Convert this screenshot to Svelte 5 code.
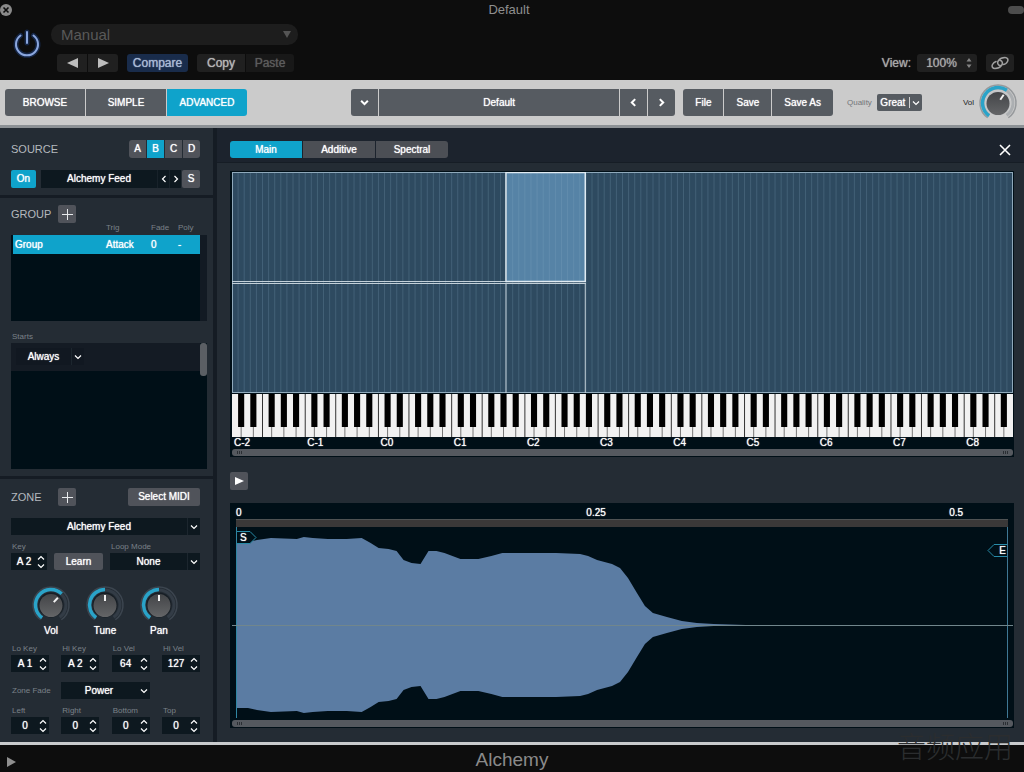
<script lang="ts">
  interface Knob {
    label: string;
    value: number;
  }

  interface Field {
    label: string;
    value: string;
  }

  const NOTES = 128;
  const BLACK = [1, 3, 6, 8, 10];
  const LENGTH = 0.536;

  const modes = ['BROWSE', 'SIMPLE', 'ADVANCED'];
  const fileActions = ['File', 'Save', 'Save As'];
  const sources = ['A', 'B', 'C', 'D'];
  const tabs = ['Main', 'Additive', 'Spectral'];

  let mode = $state('ADVANCED');
  let source = $state('B');
  let tab = $state('Main');

  const knobs: Knob[] = [
    { label: 'Vol', value: 65 },
    { label: 'Tune', value: 50 },
    { label: 'Pan', value: 50 },
  ];

  const rangeFields: Field[] = [
    { label: 'Lo Key', value: 'A 1' },
    { label: 'Hi Key', value: 'A 2' },
    { label: 'Lo Vel', value: '64' },
    { label: 'Hi Vel', value: '127' },
  ];

  const fadeFields: Field[] = [
    { label: 'Left', value: '0' },
    { label: 'Right', value: '0' },
    { label: 'Bottom', value: '0' },
    { label: 'Top', value: '0' },
  ];

  const notes = Array.from({ length: NOTES }, (_, i) => i);
  const blackKeys = notes.filter((n) => BLACK.includes(n % 12));
  // B/C and E/F have no black key between them
  const seams = notes.filter((n) => n > 0 && (n % 12 === 0 || n % 12 === 5));
  const octaves = Array.from({ length: 11 }, (_, i) => i);
  const ticks = [0, 0.25, 0.5];

  // [x, half height]
  const envelope = [
    [0, 83], [11, 83], [20, 85], [34, 87], [60, 86], [67, 88], [76, 87], [91, 86], [110, 86],
    [125, 87], [134, 82], [142, 77], [152, 76], [160, 74], [167, 65], [175, 62], [184, 61],
    [192, 74], [200, 74], [208, 72], [224, 66], [242, 66], [255, 69], [266, 72], [320, 72],
    [344, 71], [352, 69], [361, 65], [376, 61], [384, 57], [392, 47], [401, 32], [409, 19],
    [417, 12], [431, 8], [446, 4], [461, 2], [478, 1], [510, 0],
  ];
  const wave = [
    ...envelope.map(([x, h]) => `${x},${98 - h}`),
    ...[...envelope].reverse().map(([x, h]) => `${x},${98 + h}`),
  ].join(' ');

  function polar(r: number, deg: number) {
    const a = ((deg - 90) * Math.PI) / 180;
    return `${20 + r * Math.cos(a)} ${20 + r * Math.sin(a)}`;
  }

  function arc(r: number, from: number, to: number) {
    return `M${polar(r, from)}A${r} ${r} 0 ${to - from > 180 ? 1 : 0} 1 ${polar(r, to)}`;
  }

  const angle = (value: number) => -145 + value * 2.9;
</script>

{#snippet chevron(dir: string)}
  <svg class="chevron" viewBox="0 0 8 8" aria-hidden="true">
    {#if dir === 'down'}
      <path d="M1 2.5l3 3 3-3" />
    {:else if dir === 'up'}
      <path d="M1 5.5l3-3 3 3" />
    {:else if dir === 'left'}
      <path d="M5.5 1l-3 3 3 3" />
    {:else}
      <path d="M2.5 1l3 3-3 3" />
    {/if}
  </svg>
{/snippet}

{#snippet plus()}
  <svg width="11" height="11" viewBox="0 0 11 11" aria-hidden="true">
    <path d="M5.5 0v11M0 5.5h11" stroke="#e8eaec" />
  </svg>
{/snippet}

{#snippet dial(value: number, light: boolean)}
  <svg class="dial" viewBox="0 0 40 40" aria-hidden="true">
    <path d={arc(18, -145, 145)} fill="none" stroke={light ? '#96999c' : '#3c454f'} stroke-width="1.5" />
    <path d={arc(15, -145, 145)} fill="none" stroke={light ? '#acafb2' : '#333c46'} stroke-width="3" />
    <path d={arc(15.5, -145, angle(value))} fill="none" stroke="#2aa3c8" stroke-width="3.5" />
    <circle cx="20" cy="20" r="12.5" fill={light ? '#c3c5c7' : '#161d24'} />
    <circle cx="20" cy="20.5" r="11.5" fill="url(#cap)" />
    <path d={`M${polar(4, angle(value))}L${polar(10, angle(value))}`} stroke="#f2f2f2" stroke-width="2" />
  </svg>
{/snippet}

{#snippet stepper(field: Field)}
  <div class="field">
    <label class="caption" for={field.label}>{field.label}</label>
    <div class="stepper">
      <input id={field.label} value={field.value} />
      <div class="arrows">
        <button aria-label="Increase {field.label}">{@render chevron('up')}</button>
        <button aria-label="Decrease {field.label}">{@render chevron('down')}</button>
      </div>
    </div>
  </div>
{/snippet}

{#snippet scrollbar()}
  <div class="scrollbar">
    <span class="grip left"></span>
    <span class="grip right"></span>
  </div>
{/snippet}

<svg class="defs" width="0" height="0" aria-hidden="true">
  <defs>
    <linearGradient id="cap" x1="0" y1="0" x2="0" y2="1">
      <stop offset="0" stop-color="#434548" />
      <stop offset="1" stop-color="#646567" />
    </linearGradient>
  </defs>
</svg>

<div class="plugin">
  <header class="host">
    <div class="titlebar">
      <button class="window-close" aria-label="Close window">
        <svg width="12" height="12" viewBox="0 0 12 12">
          <circle cx="6" cy="6" r="6" fill="#8a8a8a" />
          <path d="M3.5 3.5l5 5M8.5 3.5l-5 5" stroke="#0d0d0d" stroke-width="1.6" />
        </svg>
      </button>
      <span class="title">Default</span>
      <button class="pill" aria-label="Toggle toolbar"></button>
    </div>
    <div class="host-body">
      <button class="power" aria-label="Power">
        <svg width="34" height="34" viewBox="0 0 34 34" fill="none" stroke-linecap="round">
          <g stroke="#1d3f80" stroke-width="5" opacity="0.5">
            <path d="M10.5 8.5a11 11 0 1 0 13 0M17 5v11" />
          </g>
          <path d="M10.5 8.5a11 11 0 1 0 13 0M17 5v11" stroke="#8aa6de" stroke-width="2" />
        </svg>
      </button>
      <div class="host-controls">
        <div class="manual">
          <select aria-label="Setting"><option>Manual</option></select>
          <svg width="8" height="7" viewBox="0 0 8 7"><path d="M0 0h8L4 7z" fill="#555" /></svg>
        </div>
        <div class="host-row">
          <div class="host-group nav">
            <button aria-label="Previous setting">
              <svg width="11" height="10" viewBox="0 0 11 10"><path d="M11 0v10L0 5z" fill="#bdbdbd" /></svg>
            </button>
            <button aria-label="Next setting">
              <svg width="11" height="10" viewBox="0 0 11 10"><path d="M0 0v10l11-5z" fill="#bdbdbd" /></svg>
            </button>
          </div>
          <button class="compare">Compare</button>
          <div class="host-group copy">
            <button>Copy</button>
            <button disabled>Paste</button>
          </div>
        </div>
      </div>
      <div class="view">
        <label for="view">View:</label>
        <div class="zoom">
          <select id="view"><option>100%</option></select>
          <svg width="6" height="10" viewBox="0 0 6 10"><path d="M3 0l2.5 3.5h-5zM3 10L.5 6.5h5z" fill="#858585" /></svg>
        </div>
        <button class="link" aria-label="Link">
          <svg width="18" height="14" viewBox="0 0 18 14" fill="none" stroke="#a0a0a0" stroke-width="1.5" stroke-linecap="round">
            <path d="M9.5 9.5C6.500 9.500 6 6.500 7.500 4.500C9 2.500 11.500 1.500 14 1.500C16.500 1.500 17.500 3.500 16.500 5.500C15.500 7.500 14 8.500 12 8.500" />
            <path d="M9 4.500C11.500 4.500 12 7.500 10.500 9.500C9 11.500 6.500 12.500 4 12.500C1.500 12.500 .5 10.500 1.500 8.500C2.300 7 3.500 6 5 5.500" />
          </svg>
        </button>
      </div>
    </div>
  </header>

  <nav class="toolbar">
    <div class="bar-group modes">
      {#each modes as item}
        <button class:active={mode === item} onclick={() => (mode = item)}>{item}</button>
      {/each}
    </div>
    <div class="bar-group preset">
      <button class="arrow" aria-label="Preset menu">{@render chevron('down')}</button>
      <button class="name">Default</button>
      <button class="arrow" aria-label="Previous preset">{@render chevron('left')}</button>
      <button class="arrow" aria-label="Next preset">{@render chevron('right')}</button>
    </div>
    <div class="bar-group files">
      {#each fileActions as item}
        <button>{item}</button>
      {/each}
    </div>
    <label class="quality-label" for="quality">Quality</label>
    <div class="quality">
      <select id="quality"><option>Great</option></select>
      <span class="arrow-box">{@render chevron('down')}</span>
    </div>
    <label class="master">
      <span>Vol</span>
      <span class="dial-box">
        {@render dial(62, true)}
        <input type="range" value="62" />
      </span>
    </label>
  </nav>

  <main>
    <aside>
      <section class="source">
        <div class="row">
          <h2>SOURCE</h2>
          <div class="letters">
            {#each sources as item}
              <button class:active={source === item} onclick={() => (source = item)}>{item}</button>
            {/each}
          </div>
        </div>
        <div class="row">
          <button class="small active on">On</button>
          <div class="picker">
            <button class="picker-name">Alchemy Feed</button>
            <button class="step" aria-label="Previous source">{@render chevron('left')}</button>
            <button class="step" aria-label="Next source">{@render chevron('right')}</button>
          </div>
          <button class="small solo">S</button>
        </div>
      </section>

      <section class="group">
        <div class="row head">
          <h2>GROUP</h2>
          <button class="small add" aria-label="Add group">{@render plus()}</button>
        </div>
        <div class="group-list">
          <table>
            <thead>
              <tr><th aria-label="Name"></th><th>Trig</th><th>Fade</th><th>Poly</th></tr>
            </thead>
            <tbody>
              <tr><td>Group</td><td>Attack</td><td>0</td><td>-</td></tr>
            </tbody>
          </table>
          <div class="lane"></div>
        </div>
        <label class="caption" for="starts">Starts</label>
        <div class="starts">
          <div class="starts-row">
            <div class="select always">
              <select id="starts"><option>Always</option></select>
              <span class="arrow-box">{@render chevron('down')}</span>
            </div>
          </div>
          <div class="thumb"></div>
        </div>
      </section>

      <section class="zone">
        <div class="row head">
          <h2>ZONE</h2>
          <button class="small add" aria-label="Add zone">{@render plus()}</button>
          <button class="small midi">Select MIDI</button>
        </div>
        <div class="select feed">
          <select aria-label="Zone"><option>Alchemy Feed</option></select>
          <span class="arrow-box">{@render chevron('down')}</span>
        </div>
        <div class="row key-row">
          {@render stepper({ label: 'Key', value: 'A 2' })}
          <button class="small learn">Learn</button>
          <div class="loop">
            <label class="caption" for="loop">Loop Mode</label>
            <div class="select">
              <select id="loop"><option>None</option></select>
              <span class="arrow-box">{@render chevron('down')}</span>
            </div>
          </div>
        </div>
        <div class="knobs">
          {#each knobs as knob}
            <label class="knob">
              <span class="dial-box">
                {@render dial(knob.value, false)}
                <input type="range" value={knob.value} />
              </span>
              <span>{knob.label}</span>
            </label>
          {/each}
        </div>
        <div class="fields">
          {#each rangeFields as field}
            {@render stepper(field)}
          {/each}
        </div>
        <div class="row fade">
          <label class="caption" for="fade">Zone Fade</label>
          <div class="select">
            <select id="fade"><option>Power</option></select>
            <span class="arrow-box plain">{@render chevron('down')}</span>
          </div>
        </div>
        <div class="fields">
          {#each fadeFields as field}
            {@render stepper(field)}
          {/each}
        </div>
      </section>
    </aside>

    <div class="editor">
      <div class="editor-head">
        <div class="tabs">
          {#each tabs as item}
            <button class:active={tab === item} onclick={() => (tab = item)}>{item}</button>
          {/each}
        </div>
        <button class="close" aria-label="Close editor">
          <svg width="12" height="12" viewBox="0 0 12 12"><path d="M1 1l10 10M11 1L1 11" stroke="#fff" stroke-width="1.6" /></svg>
        </button>
      </div>

      <div class="editor-body">
        <div class="keymap">
          <svg class="zones" viewBox="0 0 128 221" preserveAspectRatio="none">
            <rect width="128" height="221" fill="#2e4a60" />
            <rect x="45" width="13" height="110" fill="#5683a6" />
            {#each notes as n}
              <path class="hair" d="M{n} 0v221" />
            {/each}
            <path class="frame" d="M0 0H128V221H0z" />
            <path class="edge" d="M0 109.5H45M0 111.5H58M44.9 111V221M57.9 111V221" />
            <path class="edge selected" d="M44.9 .5H57.9V109.5H44.9z" />
          </svg>
          <svg class="keys" viewBox="0 0 128 43" preserveAspectRatio="none">
            <rect width="128" height="43" fill="#f1f1f1" />
            {#each seams as n}
              <path class="seam" d="M{n} 0V43" />
            {/each}
            {#each blackKeys as n}
              <path class="seam light" d="M{n + 0.5} 33V43" />
              <rect x={n} width="1" height="33" fill="#000" />
            {/each}
          </svg>
          <div class="octaves">
            {#each octaves as o}
              <span style="grid-column-start: {o * 12 + 1}">C{o - 2}</span>
            {/each}
          </div>
          {@render scrollbar()}
        </div>

        <button class="small play" aria-label="Play">
          <svg width="9" height="8" viewBox="0 0 9 8"><path d="M0 0v8l9-4z" fill="#fff" /></svg>
        </button>

        <div class="sample">
          <div class="ruler">
            {#each ticks as t}
              <span class:first={t === 0} style="left: {(t / LENGTH) * 100}%">{t}</span>
            {/each}
          </div>
          <div class="strip"></div>
          <div class="wave">
            <div class="plot">
              <svg viewBox="0 0 772 193" preserveAspectRatio="none">
                <polygon points={wave} fill="#5b7ca3" />
              </svg>
              <div class="marker start">
                <svg width="20" height="14" viewBox="0 0 20 14"><path d="M0 .5h13l6 6-6 6H0" /></svg>
                <span>S</span>
              </div>
              <div class="marker end">
                <svg width="20" height="14" viewBox="0 0 20 14"><path d="M20 .5H7l-6 6 6 6h13" /></svg>
                <span>E</span>
              </div>
            </div>
          </div>
          {@render scrollbar()}
        </div>
      </div>
    </div>
  </main>

  <footer>
    <button class="disclose" aria-label="Show more">
      <svg width="9" height="10" viewBox="0 0 9 10"><path d="M0 0v10l9-5z" fill="#8f8f8f" /></svg>
    </button>
    <span class="plugin-name">Alchemy</span>
    <span class="watermark">音频应用</span>
  </footer>
</div>

<style>
  :global(body) {
    background: #0d0d0d;
  }

  .plugin {
    display: flex;
    flex-direction: column;
    min-height: 100vh;
    background: #0d0d0d;
    color: #fff;
    font-family: 'Liberation Sans', Arial, sans-serif;
    font-size: 10px;
    line-height: 12px;
    overflow: hidden;
    text-shadow: 0 0 1px currentColor;
  }

  .plugin * {
    box-sizing: border-box;
  }

  .defs {
    position: absolute;
  }

  button,
  select,
  input {
    margin: 0;
    padding: 0;
    border: none;
    border-radius: 0;
    background: none;
    color: inherit;
    font: inherit;
    text-shadow: inherit;
    appearance: none;
    outline-offset: 1px;
  }

  button {
    display: flex;
    align-items: center;
    justify-content: center;
    cursor: pointer;
  }

  select {
    width: 100%;
    height: 100%;
    text-align-last: center;
  }

  svg {
    display: block;
    flex-shrink: 0;
  }

  h2 {
    margin: 0;
    color: #b4b9be;
    font-size: 11px;
    font-weight: normal;
    text-shadow: none;
  }

  .chevron {
    width: 8px;
    height: 8px;
    fill: none;
    stroke: currentColor;
    stroke-width: 1.2;
  }

  /* Host window */
  .host {
    height: 80px;
    color: #a8a8a8;
    font-size: 12px;
  }

  .titlebar {
    display: flex;
    align-items: center;
    justify-content: space-between;
    height: 19px;
    text-shadow: none;
  }

  .title {
    font-size: 13px;
    color: #8f8f8f;
    padding-right: 2px;
  }

  .pill {
    width: 16px;
    height: 8px;
    border-radius: 4px;
    background: #4d4d4d;
  }

  .host-body {
    display: flex;
    align-items: flex-end;
    padding: 5px 10px 0 10px;
  }

  .power {
    width: 34px;
    align-self: flex-start;
    margin-top: 3px;
  }

  .host-controls {
    display: flex;
    flex-direction: column;
    gap: 9px;
    margin-left: 7px;
  }

  .manual {
    display: flex;
    align-items: center;
    width: 247px;
    height: 21px;
    padding: 0 7px 0 10px;
    border-radius: 10px;
    background: #1d1d1d;
    color: #595959;
    font-size: 15px;
    text-shadow: none;
  }

  .manual select {
    text-align-last: left;
  }

  .host-row {
    display: flex;
    gap: 9px;
    padding-left: 6px;
  }

  .host-row button,
  .zoom,
  .link {
    height: 18px;
    background: #202020;
  }

  .host-group {
    display: flex;
    gap: 1px;
    border-radius: 3px;
    overflow: hidden;
  }

  .nav button {
    width: 30px;
  }

  .nav button,
  .copy button {
    color: #b5b5b5;
  }

  .copy button {
    width: 48px;
  }

  .copy button:disabled {
    background: #181818;
    color: #5c5c5c;
  }

  .host-row .compare {
    width: 61px;
    border-radius: 3px;
    background: #192c4b;
    color: #a9bad6;
  }

  .view {
    display: flex;
    align-items: center;
    gap: 6px;
    margin-left: auto;
  }

  .zoom {
    display: flex;
    align-items: center;
    width: 60px;
    padding-right: 5px;
    border-radius: 3px;
  }

  .link {
    width: 28px;
    margin-left: 3px;
    border-radius: 3px;
  }

  /* Light toolbar */
  .toolbar {
    display: flex;
    align-items: center;
    height: 48px;
    padding: 0 6px 0 5px;
    border-bottom: 3px solid #8c9195;
    background: #cbcbcb;
  }

  .bar-group {
    display: flex;
    gap: 1px;
    border-radius: 3px;
    overflow: hidden;
  }

  .bar-group button {
    height: 27px;
    background: #565b61;
  }

  .bar-group .chevron {
    width: 9px;
    height: 9px;
    stroke-width: 1.8;
  }

  .modes button {
    width: 80px;
  }

  .bar-group button.active {
    background: #0fa3cb;
  }

  .preset {
    flex: 1;
    margin-left: 104px;
  }

  .preset .arrow {
    width: 27px;
  }

  .preset .name {
    flex: 1;
  }

  .files {
    margin-left: 8px;
  }

  .files button {
    padding: 0 12px;
  }

  .quality-label {
    margin-left: 14px;
    color: #73767a;
    font-size: 8px;
    text-shadow: none;
  }

  .quality {
    display: flex;
    width: 45px;
    height: 17px;
    margin-left: 5px;
    border-radius: 2px;
    background: #565b61;
  }

  .quality .arrow-box {
    border-color: #d0d0d0;
    margin: 3px 0;
  }

  .master {
    display: flex;
    align-items: center;
    gap: 4px;
    margin-left: 41px;
    color: #222528;
    font-size: 8px;
    text-shadow: none;
  }

  .dial-box {
    position: relative;
    width: 40px;
    height: 40px;
  }

  .dial {
    width: 100%;
    height: 100%;
  }

  .dial-box input {
    position: absolute;
    inset: 0;
    width: 100%;
    opacity: 0;
  }

  /* Sidebar */
  main {
    display: flex;
    flex: 1;
    border-bottom: 3px solid #c9cbcd;
    background: #242c34;
  }

  aside {
    width: 217px;
    flex-shrink: 0;
    border-right: 4px solid #151c24;
  }

  section {
    padding-left: 11px;
    padding-right: 13px;
  }

  .row {
    display: flex;
    align-items: center;
  }

  .source {
    display: flex;
    flex-direction: column;
    gap: 12px;
    padding-top: 12px;
    padding-bottom: 7px;
    border-bottom: 3px solid #151c24;
  }

  .source .row {
    height: 18px;
  }

  .letters,
  .tabs {
    display: flex;
    gap: 1px;
    border-radius: 3px;
    overflow: hidden;
  }

  .letters {
    margin-left: auto;
  }

  .letters button {
    width: 17px;
    height: 18px;
    background: #50535a;
  }

  .small {
    height: 18px;
    border-radius: 2px;
    background: #50535a;
  }

  .letters .active,
  .tabs .active,
  .small.active {
    background: #0fa3cb;
  }

  .on {
    width: 25px;
  }

  .solo {
    width: 18px;
    margin-left: 1px;
  }

  .picker {
    display: flex;
    flex: 1;
    height: 18px;
    margin-left: 5px;
    background: #0d181f;
  }

  .picker-name {
    flex: 1;
  }

  .step {
    width: 12px;
    border-left: 1px solid #18222a;
  }

  .small.add {
    width: 18px;
  }

  .head h2 {
    width: 47px;
  }

  .caption {
    display: block;
    height: 10px;
    padding-left: 1px;
    color: #7a8188;
    font-size: 8px;
    line-height: 10px;
    white-space: nowrap;
    text-shadow: none;
  }

  .group {
    padding-top: 7px;
    padding-right: 6px;
    padding-bottom: 7px;
    border-bottom: 3px solid #151c24;
  }

  .group-list {
    display: flex;
    height: 98px;
    margin-bottom: 11px;
    padding-left: 2px;
    background: linear-gradient(transparent 12px, #000f17 12px);
  }

  .lane {
    width: 7px;
    margin-top: 12px;
    background: #121a23;
  }

  table {
    flex: 1;
    align-self: flex-start;
    table-layout: fixed;
    border-collapse: collapse;
    text-align: left;
  }

  th {
    height: 12px;
    padding: 0;
    color: #7a8188;
    font-size: 8px;
    font-weight: normal;
    line-height: 10px;
    vertical-align: top;
    text-shadow: none;
  }

  th:nth-child(1) {
    width: 93px;
  }

  th:nth-child(2) {
    width: 45px;
  }

  th:nth-child(3) {
    width: 27px;
  }

  td {
    height: 19px;
    padding: 1px 0 0;
    background: #0fa3cb;
  }

  td:first-child {
    padding-left: 2px;
  }

  .starts {
    display: flex;
    height: 126px;
    margin-top: 1px;
    background: #000f17;
  }

  .starts-row {
    flex: 1;
    height: 28px;
    padding: 5px;
    background: #141b24;
  }

  .thumb {
    width: 7px;
    height: 33px;
    border-radius: 3px;
    background: #5b5f64;
  }

  .select {
    display: flex;
    height: 17px;
    background: #0d181f;
  }

  .select.always {
    width: 68px;
    background: #111821;
  }

  .arrow-box {
    display: flex;
    align-items: center;
    justify-content: center;
    width: 13px;
    flex-shrink: 0;
    border-left: 1px solid #1c262e;
  }

  .arrow-box.plain {
    border-color: transparent;
  }

  /* Zone */
  .zone {
    padding-top: 9px;
    padding-bottom: 7px;
  }

  .small.midi {
    width: 72px;
    margin-left: auto;
  }

  .feed {
    margin-top: 12px;
  }

  .key-row {
    align-items: flex-end;
    gap: 7px;
    margin-top: 7px;
  }

  .key-row :global(.field) {
    width: 36px;
  }

  .learn {
    width: 49px;
    height: 17px;
  }

  .loop {
    flex: 1;
  }

  .loop .select,
  .stepper {
    margin-top: 1px;
  }

  .field {
    width: 38px;
  }

  .stepper {
    display: flex;
    height: 17px;
    background: #0d181f;
  }

  .stepper input {
    flex: 1;
    min-width: 0;
    text-align: center;
  }

  .arrows {
    display: flex;
    flex-direction: column;
    justify-content: space-between;
    align-items: center;
    width: 10px;
    padding: 1px 2px 1px 0;
  }

  .arrows button {
    height: 7px;
  }

  .knobs {
    display: flex;
    justify-content: space-between;
    padding: 0 21px 0 20px;
    margin-top: 15px;
  }

  .knob {
    display: flex;
    flex-direction: column;
    align-items: center;
    width: 40px;
  }

  .fields {
    display: flex;
    justify-content: space-between;
    margin-top: 7px;
  }

  .fade {
    margin-top: 10px;
  }

  .fade .caption {
    width: 50px;
  }

  .fade .select {
    width: 89px;
  }

  /* Editor */
  .editor {
    flex: 1;
    min-width: 0;
  }

  .editor-head {
    display: flex;
    align-items: center;
    justify-content: space-between;
    height: 35px;
    padding: 9px 13px 0;
    border-bottom: 1px solid #161d25;
    background: #1c232d;
  }

  .tabs button {
    width: 72px;
    height: 17px;
    background: #4c4f55;
  }

  .editor-body {
    padding: 8px 10px 13px 13px;
  }

  .keymap,
  .sample {
    padding: 1px 1px 1px 2px;
    background: #000f17;
  }

  .zones {
    width: 100%;
    height: 221px;
  }

  .zones path {
    fill: none;
    vector-effect: non-scaling-stroke;
  }

  .hair {
    stroke: #8fb0c8;
    stroke-opacity: 0.22;
  }

  .frame {
    stroke: #8fa9bb;
    stroke-width: 2;
  }

  .edge {
    stroke: #c3d0d9;
  }

  .edge.selected {
    stroke: #dfeaf2;
    stroke-width: 1.5;
  }

  .keys {
    width: 100%;
    height: 43px;
    margin-top: 1px;
  }

  .seam {
    stroke: #333;
    vector-effect: non-scaling-stroke;
  }

  .seam.light {
    stroke: #777;
  }

  .octaves {
    display: grid;
    grid-template-columns: repeat(128, minmax(0, 1fr));
    height: 12px;
    line-height: 11px;
  }

  .octaves span {
    grid-row: 1;
    padding-left: 2px;
    white-space: nowrap;
  }

  .scrollbar {
    display: flex;
    justify-content: space-between;
    height: 7px;
    border-radius: 3px;
    background: #55595f;
  }

  .grip {
    width: 5px;
    height: 3px;
    margin: 2px 5px;
    background: repeating-linear-gradient(90deg, #2a2e33 0 1px, transparent 1px 2px);
  }

  .play {
    width: 18px;
    margin: 15px 0 13px;
  }

  .sample {
    padding: 3px 1px 1px 2px;
  }

  .ruler {
    position: relative;
    height: 13px;
    margin: 0 5px 0 4px;
    line-height: 14px;
  }

  .ruler span {
    position: absolute;
    transform: translateX(-50%);
  }

  .ruler .first {
    transform: none;
  }

  .strip {
    height: 8px;
    margin: 0 5px 0 4px;
    border-top: 1px solid #4f5253;
    background: #3a3838;
  }

  .wave {
    position: relative;
    height: 193px;
    padding: 0 5px 0 4px;
  }

  .wave::after {
    content: '';
    position: absolute;
    top: 98px;
    left: 0;
    right: 0;
    height: 1px;
    background: #71868c;
  }

  .plot {
    position: relative;
    height: 191px;
    border-left: 1px solid #2f86a3;
    border-right: 1px solid #3f7895;
  }

  .plot > svg {
    width: 100%;
    height: 193px;
  }

  .marker {
    position: absolute;
  }

  .marker path {
    fill: #000f17;
    stroke: #278ba8;
  }

  .marker span {
    position: absolute;
    top: 1px;
  }

  .start {
    top: 4px;
    left: 0;
  }

  .start span {
    left: 3px;
  }

  .end {
    top: 17px;
    right: 0;
  }

  .end span {
    right: 1px;
  }

  /* Footer */
  footer {
    position: relative;
    display: flex;
    align-items: center;
    justify-content: center;
    height: 27px;
    text-shadow: none;
  }

  .disclose {
    position: absolute;
    left: 7px;
    bottom: 5px;
  }

  .plugin-name {
    color: #8a8a8a;
    font-size: 19px;
    line-height: 22px;
    padding-top: 3px;
  }

  .watermark {
    position: absolute;
    right: 11px;
    bottom: 7px;
    color: #2b2d2f;
    font-family: 'Noto Sans CJK SC', sans-serif;
    font-size: 29px;
    font-weight: 300;
    line-height: 40px;
  }
</style>
